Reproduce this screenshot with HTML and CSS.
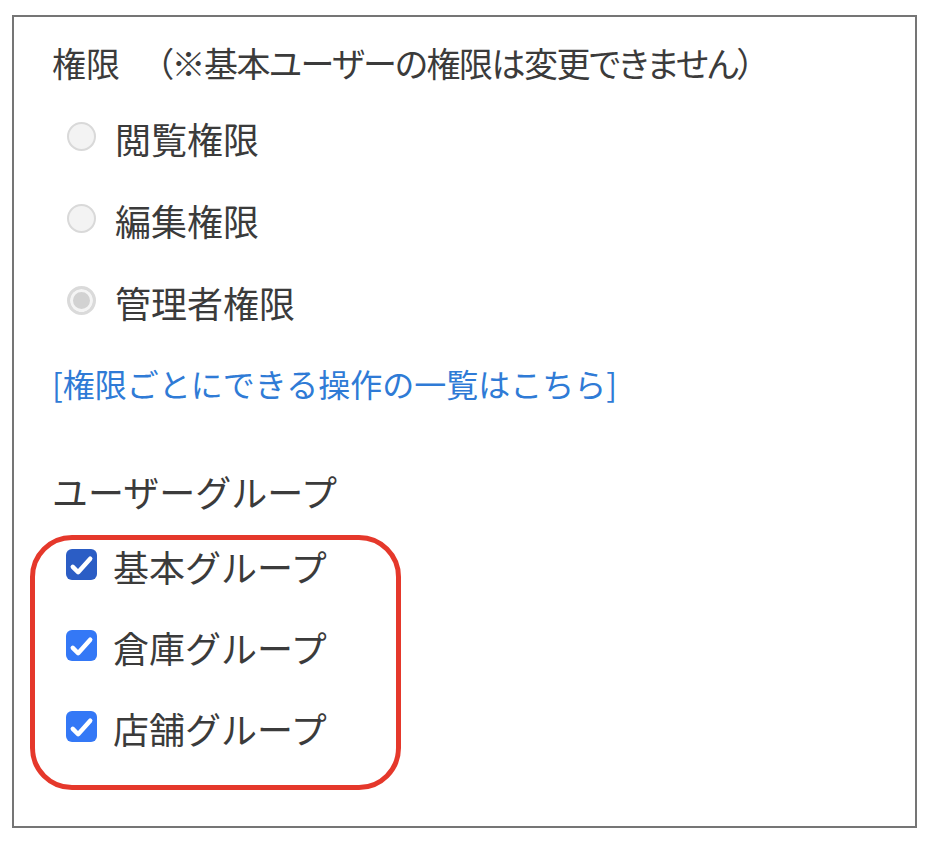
FILE: index.html
```html
<!DOCTYPE html>
<html lang="ja">
<head>
    <meta charset="UTF-8">
    <meta name="viewport" content="width=device-width, initial-scale=1.0">
    <title>ユーザー権限</title>
    <link rel="stylesheet" href="styles.css">
</head>
<body>

<div class="panel">
    <div class="heading">権限<span class="note">（※基本ユーザーの権限は変更できません）</span></div>

    <!-- 権限（変更不可） -->
    <div class="radio-list">
        <label class="row">
            <span class="radio"></span>
            閲覧権限
        </label>
        <label class="row">
            <span class="radio"></span>
            編集権限
        </label>
        <label class="row">
            <span class="radio checked"></span>
            管理者権限
        </label>
    </div>

    <a class="link" href="#">[権限ごとにできる操作の一覧はこちら]</a>

    <div class="heading group-title">ユーザーグループ</div>

    <!-- 赤枠で囲ったグループ一覧 -->
    <div class="group-box">
        <label class="row check-row">
            <span class="check focus">
                <svg viewBox="0 0 32 32" width="31" height="31"><path d="M7 18.5 L12.5 24 L25 10" fill="none" stroke="#fff" stroke-width="4.6" stroke-linecap="round" stroke-linejoin="round"/></svg>
            </span>
            基本グループ
        </label>
        <label class="row check-row">
            <span class="check">
                <svg viewBox="0 0 32 32" width="31" height="31"><path d="M7 18.5 L12.5 24 L25 10" fill="none" stroke="#fff" stroke-width="4.6" stroke-linecap="round" stroke-linejoin="round"/></svg>
            </span>
            倉庫グループ
        </label>
        <label class="row check-row">
            <span class="check">
                <svg viewBox="0 0 32 32" width="31" height="31"><path d="M7 18.5 L12.5 24 L25 10" fill="none" stroke="#fff" stroke-width="4.6" stroke-linecap="round" stroke-linejoin="round"/></svg>
            </span>
            店舗グループ
        </label>
    </div>
</div>

</body>
</html>
```

FILE: styles.css
```css
body {
    margin: 0;
    background-color: #fff;
    font-family: "Noto Sans CJK JP", "Noto Sans", sans-serif;
    color: #3b3b3b;
}

.panel {
    box-sizing: border-box;
    width: 905px;
    height: 813px;
    margin: 15px 0 0 12px;
    padding: 24px 0 0 38px;
    border: 2px solid #757575;
}

.heading {
    font-size: 34px;
    line-height: 44px;
    height: 44px;
    white-space: nowrap;
}

.note {
    margin-left: 36px;
    letter-spacing: -1.5px;
    font-feature-settings: "palt";
}

.radio-list {
    margin-top: 12px;
}

.row {
    display: flex;
    align-items: center;
    height: 82px;
    font-size: 36px;
}

.radio {
    box-sizing: border-box;
    width: 29px;
    height: 29px;
    margin: -4px 19px 0 15px;
    border-radius: 50%;
    border: 2px solid #d9d9d9;
    background-color: #f3f3f3;
}

.radio.checked {
    border: 3px solid #dadada;
    background-color: #d2d2d2;
    box-shadow: inset 0 0 0 3px #f4f4f4;
}

.link {
    display: block;
    margin-top: 18px;
    font-size: 32px;
    line-height: 44px;
    color: #2f7bd6;
    text-decoration: none;
}

.group-title {
    margin-top: 64px;
    font-size: 36px;
}

.group-box {
    box-sizing: border-box;
    width: 371px;
    height: 255px;
    margin: 22px 0 0 -22px;
    padding: 1px 0 0 31px;
    border: 5px solid #e5382b;
    border-radius: 42px;
}

.check-row {
    height: 50px;
    margin-bottom: 31px;
}

.check {
    display: flex;
    width: 31px;
    height: 31px;
    margin: -4px 16px 0 0;
    border-radius: 6px;
    background-color: #3478f6;
}

.check.focus {
    background-color: #2b5dc5;
}
```
